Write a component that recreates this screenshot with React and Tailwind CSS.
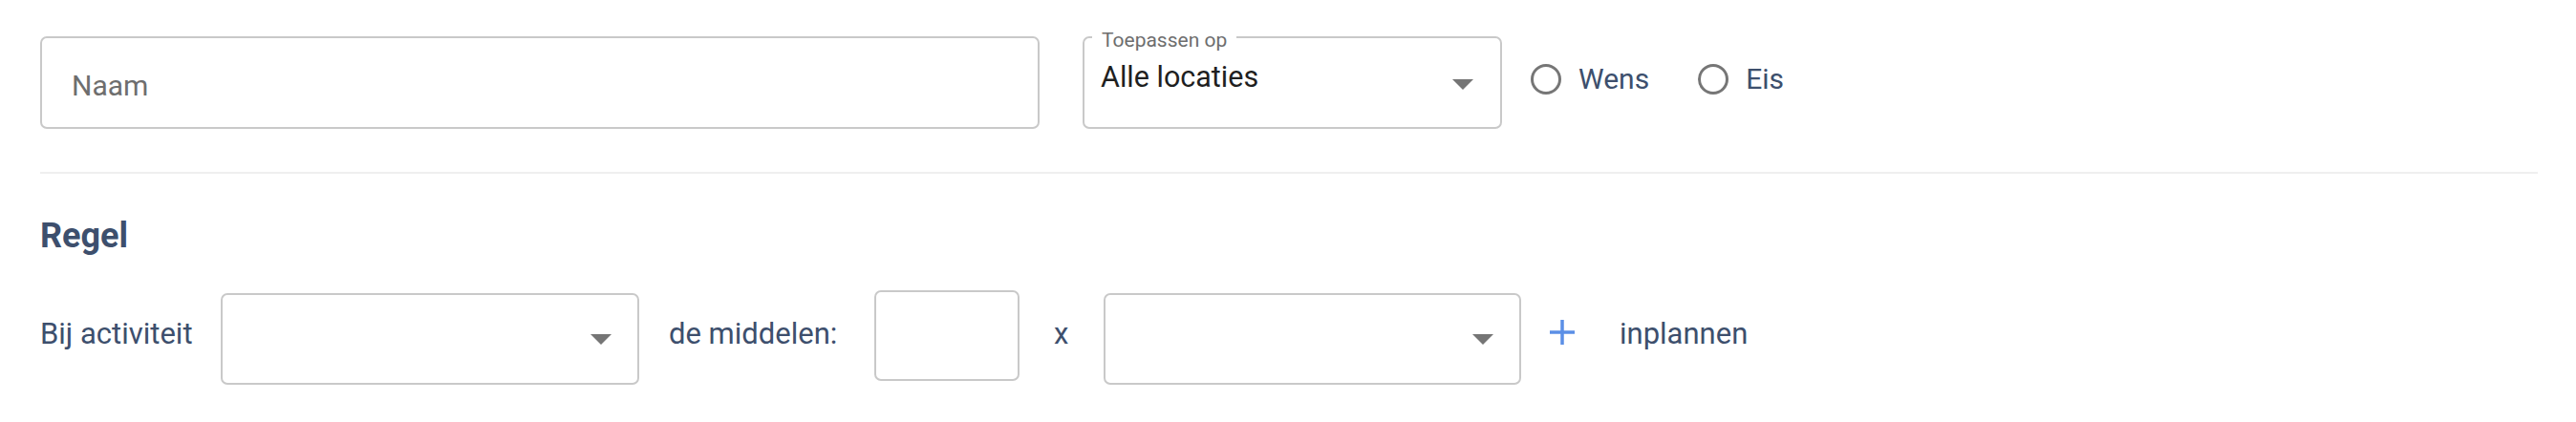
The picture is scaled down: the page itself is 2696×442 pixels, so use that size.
import React from "react";

const FONT = { fontFamily: "Roboto, 'Liberation Sans', sans-serif" };

function Arrow() {
  return (
    <svg width="22" height="11" viewBox="0 0 22 11" className="shrink-0">
      <polygon points="0,0 22,0 11,11" fill="#757575" />
    </svg>
  );
}

function Radio({ label }) {
  return (
    <div className="flex items-center h-[36px]">
      <div className="w-[32px] h-[32px] rounded-full border-[3px] border-[#767676]" />
      <span className="ml-[18px] text-[30px] leading-[36px] text-[#3d4f6d]">{label}</span>
    </div>
  );
}

function Plus() {
  return (
    <svg width="26" height="26" viewBox="0 0 26 26">
      <line x1="13" y1="0" x2="13" y2="26" stroke="#5b8fe6" strokeWidth="3.5" />
      <line x1="0" y1="13" x2="26" y2="13" stroke="#5b8fe6" strokeWidth="3.5" />
    </svg>
  );
}

export default function App() {
  return (
    <div className="bg-white w-[2696px] h-[442px] pl-[42px] pr-[40px] pt-[38px]" style={FONT}>
      {/* Row 1 */}
      <div className="flex items-start">
        <div className="w-[1046px] h-[97px] rounded-[7px] border-2 border-[#c9c9c9] flex items-start pl-[31px] pt-[32px]">
          <span className="text-[30px] leading-[36px] text-[#6e6e6e]">Naam</span>
        </div>
        <div className="relative ml-[45px] w-[439px] h-[97px] rounded-[7px] border-2 border-[#c9c9c9] flex items-start justify-between pl-[17px] pr-[28px] pt-[23px]">
          <span className="absolute left-[8px] top-[-8px] bg-white px-[10px] text-[21px] leading-[21px] text-[#6e6e6e]">
            Toepassen op
          </span>
          <span className="text-[30.5px] leading-[36px] text-[#1f1f1f]">Alle locaties</span>
          <div className="mt-[20px]">
            <Arrow />
          </div>
        </div>
        <div className="ml-[30px] mt-[27px] flex items-center gap-[51px]">
          <Radio label="Wens" />
          <Radio label="Eis" />
        </div>
      </div>

      {/* Divider */}
      <div className="mt-[45px] h-[2px] bg-[#efefef]" />

      {/* Heading */}
      <h2 className="mt-[43px] text-[36px] leading-[44px] font-bold text-[#3d4f6d]">Regel</h2>

      {/* Row 2 */}
      <div className="mt-[35px] flex items-start">
        <span className="w-[189px] shrink-0 whitespace-nowrap mt-[28px] text-[31px] leading-[36px] text-[#3d4f6d]">
          Bij activiteit
        </span>
        <div className="mt-[3px] w-[438px] shrink-0 h-[96px] rounded-[7px] border-2 border-[#c9c9c9] flex items-center justify-end pr-[27px]">
          <Arrow />
        </div>
        <span className="ml-[31px] w-[215px] shrink-0 whitespace-nowrap mt-[28px] text-[31px] leading-[36px] text-[#3d4f6d]">
          de middelen:
        </span>
        <div className="w-[152px] shrink-0 h-[95px] rounded-[7px] border-2 border-[#c9c9c9]" />
        <span className="ml-[36px] w-[52px] shrink-0 mt-[28px] text-[31px] leading-[36px] text-[#3d4f6d]">x</span>
        <div className="mt-[3px] w-[437px] shrink-0 h-[96px] rounded-[7px] border-2 border-[#c9c9c9] flex items-center justify-end pr-[27px]">
          <Arrow />
        </div>
        <div className="ml-[30px] mt-[31px] shrink-0">
          <Plus />
        </div>
        <span className="ml-[47px] whitespace-nowrap mt-[28px] text-[31px] leading-[36px] text-[#3d4f6d]">inplannen</span>
      </div>
    </div>
  );
}
